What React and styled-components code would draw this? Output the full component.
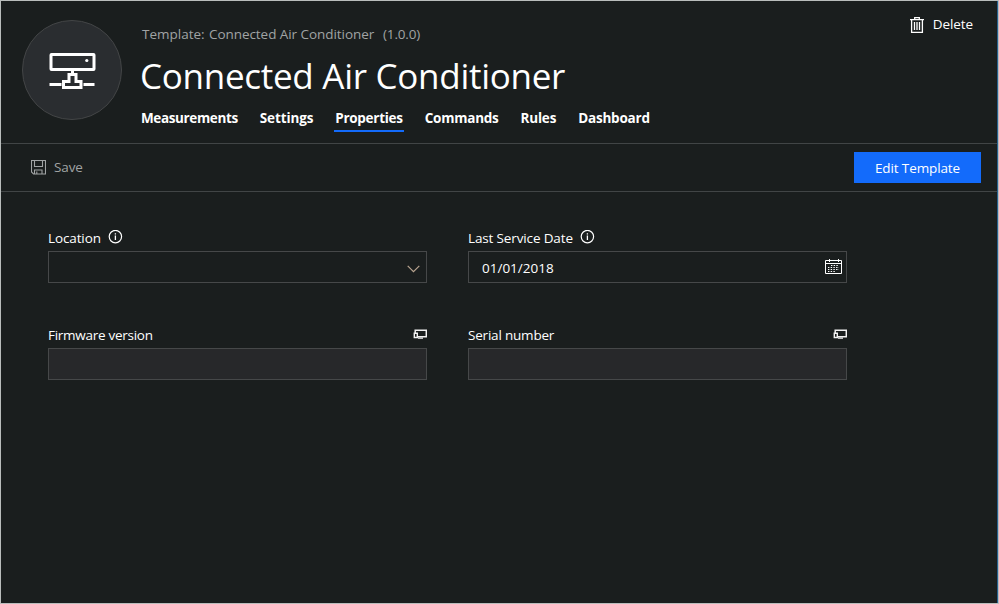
import React from 'react';
import styled, { createGlobalStyle } from 'styled-components';

const Global = createGlobalStyle`
  *, *::before, *::after { box-sizing: border-box; }
  body { margin: 0; background: #1a1e1e; }
  button, input { font: inherit; color: inherit; margin: 0; border-radius: 0; }
`;

const Page = styled.main`
  height: 604px;
  border: 1px solid #b9bdbc;
  background: #1a1e1e;
  box-shadow: inset -1px 0 #28608f;
  color: #fff;
  font: 13.5px/20px "Open Sans", "Noto Sans", sans-serif;
  overflow: hidden;
`;

const Header = styled.header`
  display: flex;
  height: 143px;
  margin-right: 1px;
  padding: 19px 24px 0 21px;
  border-bottom: 1px solid #414546;
`;

const Avatar = styled.div`
  width: 100px;
  height: 100px;
  flex: none;
  border: 1px solid #434546;
  border-radius: 50%;
  background: #2a2d30;
  svg { display: block; margin: 30.5px 0 0 26px; }
`;

const Heading = styled.div`
  flex: 1;
  padding: 4px 0 0 20px;
`;

const TemplateInfo = styled.div`
  display: flex;
  color: #a0a3a4;
`;

const TemplateLabel = styled.span`
  width: 67px;
`;

const TemplateName = styled.span`
  width: 174px;
  letter-spacing: -0.06px;
`;

const Version = styled.span`
  letter-spacing: -0.15px;
`;

const Title = styled.h1`
  margin: 8px 0 8px -2px;
  font-size: 35px;
  line-height: 48px;
  font-weight: 400;
  letter-spacing: -0.28px;
  white-space: nowrap;
`;

const Tabs = styled.nav`
  display: flex;
  gap: 20px;
  margin-left: -2px;
`;

const Tab = styled.a`
  padding: 0 1px 2px;
  height: 24px;
  font-weight: 700;
  letter-spacing: ${(p) => p.$tracking || 0}px;
  border-bottom: 2px solid ${(p) => (p.$active ? '#136bfb' : 'transparent')};
`;

const TextButton = styled.button`
  display: flex;
  align-items: center;
  gap: ${(p) => p.$gap}px;
  height: 20px;
  padding: 0;
  border: 0;
  background: none;
  color: ${(p) => (p.$muted ? '#a0a3a4' : '#fff')};
  letter-spacing: -0.1px;
`;

const HeaderActions = styled.div`
  margin-top: -6px;
  svg { margin-top: 2px; }
`;

const Toolbar = styled.div`
  display: flex;
  align-items: center;
  justify-content: space-between;
  height: 48px;
  margin-right: 1px;
  padding: 0 16px 1px 30px;
  border-bottom: 1px solid #414546;
`;

const PrimaryButton = styled.button`
  width: 127px;
  height: 31px;
  padding: 1px 0 0;
  border: 0;
  background: #136bfb;
  color: #fff;
  letter-spacing: -0.12px;
`;

const Form = styled.form`
  display: grid;
  grid-template-columns: 379px 379px;
  column-gap: 41px;
  row-gap: 42px;
  padding: 36px 0 0 47px;
`;

const Field = styled.div`
  display: grid;
  grid-template-rows: 23px 32px;
`;

const LabelRow = styled.div`
  display: flex;
  justify-content: ${(p) => (p.$spread ? 'space-between' : 'flex-start')};
  gap: 7px;
  svg { margin-top: ${(p) => (p.$spread ? 4 : 2)}px; }
`;

const Label = styled.label`
  letter-spacing: ${(p) => p.$tracking || 0}px;
`;

const Control = styled.div`
  display: flex;
  align-items: center;
  justify-content: space-between;
  border: 1px solid #464849;
  padding: 0 ${(p) => p.$end || 0}px 0 13px;
  background: ${(p) => (p.$readOnly ? '#27282a' : 'transparent')};
`;

const Value = styled.span`
  padding-top: 2px;
`;

const AirConditionerIcon = () => (
  <svg width="47" height="38" viewBox="0 0 47 38" fill="none" stroke="#fff" strokeWidth="3">
    <rect x="2" y="2.5" width="43" height="15" rx="0.5" />
    <path d="M23.5 17v6M.5 32.5h12M34.5 32.5h11" />
    <path d="M20 29v-6.5h7V29.5h5v6H14.5v-6h7" />
    <circle cx="37.8" cy="8.5" r="1.6" fill="#fff" stroke="none" />
  </svg>
);

const TrashIcon = () => (
  <svg width="14" height="17" viewBox="0 0 14 17" fill="none" stroke="#fff">
    <path d="M0 2.6h14M4.7 2.5v-2h4.6v2M1.6 3v12.4h10.8V3" strokeWidth="1.3" />
    <path d="M4.5 5v8M7 5v8M9.5 5v8" strokeWidth="1.3" />
  </svg>
);

const SaveIcon = () => (
  <svg width="15" height="15" viewBox="0 0 15 15" fill="none" stroke="#a0a3a4">
    <path d="M.5 .5h14v13.5H2.5l-2-2zM3.5 .5v6h8v-6M3.5 14v-4h7.5v4M5.8 14v-2.5" strokeWidth="1.1" />
  </svg>
);

const InfoIcon = () => (
  <svg width="15" height="15" viewBox="0 0 15 15" fill="none" stroke="#fff">
    <circle cx="7.4" cy="6.6" r="6.2" strokeWidth="1.2" />
    <path d="M7.4 5.6v4.4M7.4 3.3v1.3" strokeWidth="1.3" />
  </svg>
);

const Chevron = styled.svg`
  display: block;
  margin-top: 3px;
`;

const ChevronIcon = () => (
  <Chevron width="13" height="8" viewBox="0 0 13 8" fill="none" stroke="#b9a590" strokeWidth="1.2">
    <path d="M.7 .9l5.8 5.8L12.3.9" />
  </Chevron>
);

const CalendarIcon = () => (
  <svg width="17" height="16" viewBox="0 0 17 16" fill="none" stroke="#fff">
    <path d="M.5 1.5h16v13H.5zM.5 4.5h16M4.5 0v3M13.5 0v3" />
    <path d="M6 6.5h8M3 8.5h11M3 10.5h11M3 12.5h8" strokeDasharray="1.4 1.3" />
  </svg>
);

const DeviceIcon = () => (
  <svg width="14" height="11" viewBox="0 0 14 11" fill="none" stroke="#f2f2f2">
    <path d="M2.2 4V1.2h11.1v6.6H5" strokeWidth="1.5" />
    <path d="M1.3 4.3h3v4.2h-3zM5 9.1h5" strokeWidth="1.4" />
  </svg>
);

const tabs = [
  { name: 'Measurements', tracking: -0.37 },
  { name: 'Settings', tracking: -0.13 },
  { name: 'Properties', tracking: -0.28, active: true },
  { name: 'Commands', tracking: -0.24 },
  { name: 'Rules', tracking: -0.2 },
  { name: 'Dashboard', tracking: -0.2 },
];

export default function App() {
  return (
    <Page>
      <Global />
      <Header>
        <Avatar><AirConditionerIcon /></Avatar>
        <Heading>
          <TemplateInfo>
            <TemplateLabel>Template:</TemplateLabel>
            <TemplateName>Connected Air Conditioner</TemplateName>
            <Version>(1.0.0)</Version>
          </TemplateInfo>
          <Title>Connected Air Conditioner</Title>
          <Tabs>
            {tabs.map((t) => (
              <Tab key={t.name} $active={t.active} $tracking={t.tracking}>{t.name}</Tab>
            ))}
          </Tabs>
        </Heading>
        <HeaderActions>
          <TextButton $gap={9}><TrashIcon />Delete</TextButton>
        </HeaderActions>
      </Header>
      <Toolbar>
        <TextButton $muted $gap={8}><SaveIcon />Save</TextButton>
        <PrimaryButton>Edit Template</PrimaryButton>
      </Toolbar>
      <Form>
        <Field>
          <LabelRow><Label $tracking={-0.12}>Location</Label><InfoIcon /></LabelRow>
          <Control $end={6}><Value /><ChevronIcon /></Control>
        </Field>
        <Field>
          <LabelRow><Label $tracking={-0.14}>Last Service Date</Label><InfoIcon /></LabelRow>
          <Control $end={4}><Value>01/01/2018</Value><CalendarIcon /></Control>
        </Field>
        <Field>
          <LabelRow $spread><Label $tracking={-0.27}>Firmware version</Label><DeviceIcon /></LabelRow>
          <Control $readOnly />
        </Field>
        <Field>
          <LabelRow $spread><Label $tracking={-0.2}>Serial number</Label><DeviceIcon /></LabelRow>
          <Control $readOnly />
        </Field>
      </Form>
    </Page>
  );
}
